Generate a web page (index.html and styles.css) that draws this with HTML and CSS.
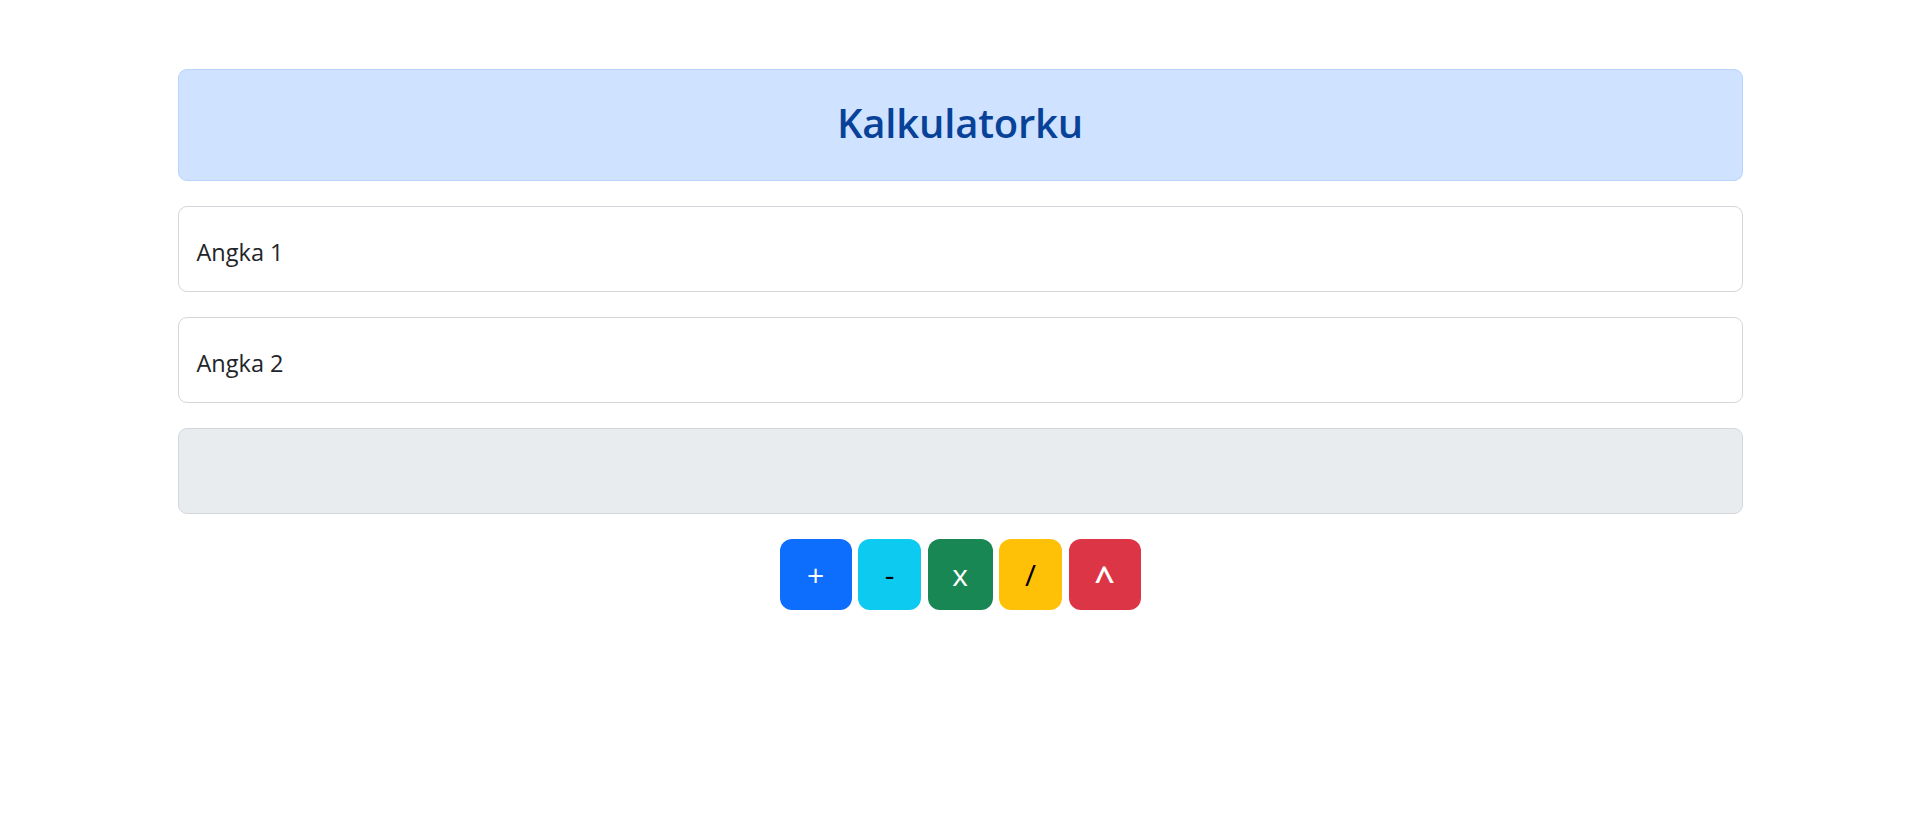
FILE: index.html
```html
<!DOCTYPE html>
<html lang="id">
<head>
<meta charset="utf-8">
<title>Kalkulatorku</title>
<link rel="stylesheet" href="styles.css">
</head>
<body>
<main class="container">
  <div class="alert"><h1 class="title">Kalkulatorku</h1></div>
  <div class="field"><span class="label">Angka 1</span></div>
  <div class="field"><span class="label">Angka 2</span></div>
  <div class="field result"></div>
  <div class="buttons">
    <button class="btn btn-add">+</button>
    <button class="btn btn-sub">-</button>
    <button class="btn btn-mul">x</button>
    <button class="btn btn-div">/</button>
    <button class="btn btn-pow">^</button>
  </div>
</main>
</body>
</html>
```
FILE: styles.css
```css
* { box-sizing: border-box; }
html, body { margin: 0; padding: 0; background: #fff; }
body {
  font-family: "Open Sans", "Noto Sans", "Liberation Sans", sans-serif;
  color: #212529;
}
.container {
  width: 1565px;
  margin: 0 auto;
  padding-top: 69px;
  display: flex;
  flex-direction: column;
  gap: 25px;
}
.alert {
  height: 112px;
  background: #cfe2ff;
  border: 1.5px solid #b6d4fe;
  border-radius: 9px;
  display: flex;
  align-items: center;
  justify-content: center;
  padding-bottom: 6px;
}
.title {
  margin: 0;
  font-size: 40px;
  font-weight: 600;
  color: #084298;
  letter-spacing: -0.2px;
}
.field {
  height: 86px;
  border: 1.5px solid #d3d7dc;
  border-radius: 9px;
  background: #fff;
  display: flex;
  align-items: center;
  padding: 5px 18px 0;
}
.label {
  font-size: 23.5px;
  color: #212529;
}
.result { background: #e9ecef; }
.buttons {
  display: flex;
  justify-content: center;
  gap: 6.5px;
}
.btn {
  height: 71px;
  border: none;
  border-radius: 12px;
  font-family: "Open Sans", "Noto Sans", sans-serif;
  font-size: 30px;
  padding: 0;
  line-height: 1;
  display: flex;
  align-items: center;
  justify-content: center;
}
.btn-add { width: 72px; background: #0d6efd; color: #fff; }
.btn-sub { width: 63px; background: #0dcaf0; color: #000; }
.btn-mul { width: 65px; background: #198754; color: #fff; }
.btn-div { width: 63px; background: #ffc107; color: #000; }
.btn-pow { width: 72px; background: #dc3545; color: #fff; font-size: 36px; padding-top: 8px; font-weight: 600; }
```
